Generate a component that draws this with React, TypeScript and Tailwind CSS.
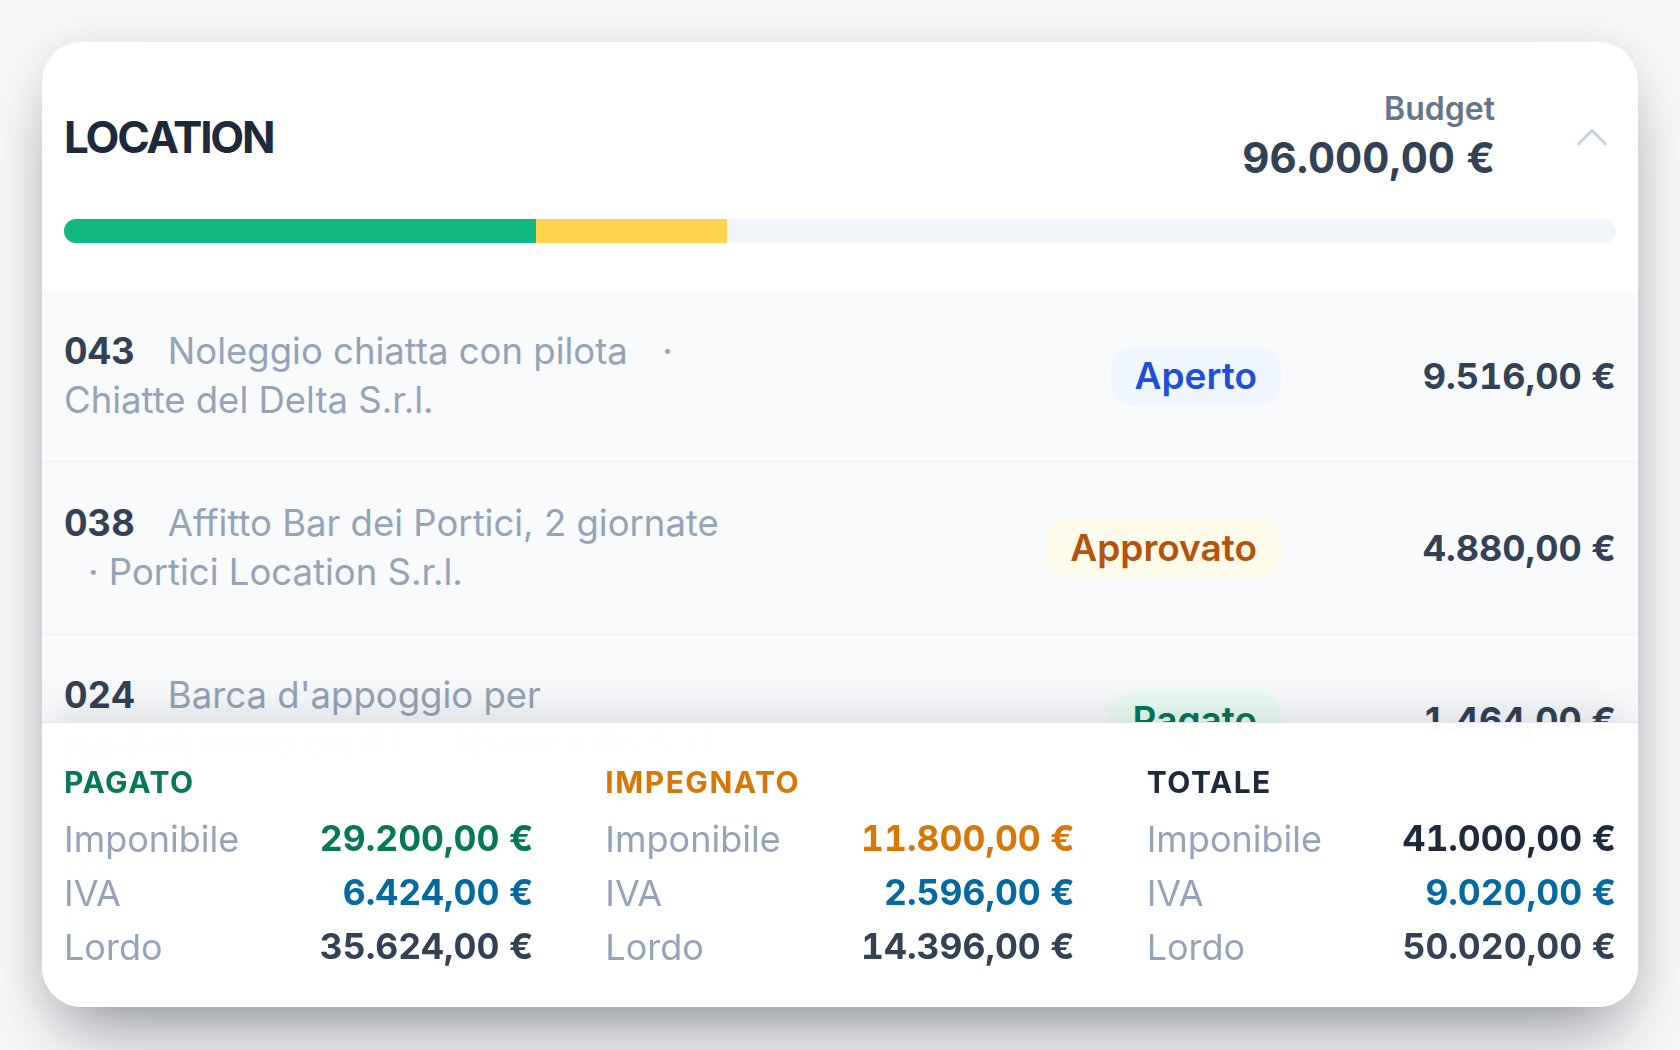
import { ChevronUp } from 'lucide-react';

type Row = {
  code: string;
  title: string;
  vendor: string;
  status: 'Aperto' | 'Approvato' | 'Pagato';
  amount: string;
};

const ROWS: Row[] = [
  { code: '043', title: 'Noleggio chiatta con pilota', vendor: 'Chiatte del Delta S.r.l.', status: 'Aperto', amount: '9.516,00 €' },
  { code: '038', title: 'Affitto Bar dei Portici, 2 giornate', vendor: 'Portici Location S.r.l.', status: 'Approvato', amount: '4.880,00 €' },
  { code: '024', title: "Barca d'appoggio per trasferimento ospiti", vendor: 'Nautica Po S.r.l.', status: 'Pagato', amount: '1.464,00 €' },
  { code: '017', title: 'Permessi portuali e ormeggio', vendor: 'Comune di Porto Tolle', status: 'Pagato', amount: '2.318,00 €' },
];

const BADGE: Record<Row['status'], string> = {
  Aperto: 'bg-[#eff6ff] text-[#1d4ed8]',
  Approvato: 'bg-[#fffbeb] text-[#b45309]',
  Pagato: 'bg-[#ecfdf5] text-[#047857]',
};

const TOTALS = [
  {
    label: 'PAGATO',
    labelClass: 'text-[#047857]',
    lines: [
      { k: 'Imponibile', v: '29.200,00 €', c: 'text-[#047857]' },
      { k: 'IVA', v: '6.424,00 €', c: 'text-[#0369a1]' },
      { k: 'Lordo', v: '35.624,00 €', c: 'text-[#334155]' },
    ],
  },
  {
    label: 'IMPEGNATO',
    labelClass: 'text-[#d97706]',
    lines: [
      { k: 'Imponibile', v: '11.800,00 €', c: 'text-[#d97706]' },
      { k: 'IVA', v: '2.596,00 €', c: 'text-[#0369a1]' },
      { k: 'Lordo', v: '14.396,00 €', c: 'text-[#334155]' },
    ],
  },
  {
    label: 'TOTALE',
    labelClass: 'text-[#1e293b]',
    lines: [
      { k: 'Imponibile', v: '41.000,00 €', c: 'text-[#1e293b]' },
      { k: 'IVA', v: '9.020,00 €', c: 'text-[#0369a1]' },
      { k: 'Lordo', v: '50.020,00 €', c: 'text-[#334155]' },
    ],
  },
];

export default function App() {
  const budget = 96000;
  const paid = 29200;
  const committed = 11800;

  return (
    <div className="min-h-screen bg-[#f7f7f8] p-[42px] font-['Inter',sans-serif]">
      <div className="flex h-[965px] flex-col overflow-hidden rounded-[40px] bg-white shadow-[0_40px_70px_-20px_rgba(15,23,42,0.42),0_0_44px_rgba(15,23,42,0.08)]">
        {/* header */}
        <div className="px-[22px] pt-[47px] pb-[48px]">
          <div className="flex items-center">
            <h2 className="flex-1 text-[44px] leading-[52px] font-bold tracking-tighter text-[#1e293b]">LOCATION</h2>
            <div className="text-right">
              <div className="text-[32px] leading-[40px] font-semibold text-[#64748b]">Budget</div>
              <div className="mt-[3px] text-[42px] leading-[52px] font-bold tabular-nums text-[#334155]">96.000,00 €</div>
            </div>
            <button className="ml-[73px] flex h-12 w-12 items-center justify-center text-[#cbd5e1]">
              <ChevronUp size={52} strokeWidth={1.5} className="shrink-0" />
            </button>
          </div>
          <div className="mt-[35px] flex h-6 overflow-hidden rounded-full bg-[#f1f5f9]">
            <div className="h-full bg-[#10b981]" style={{ width: `${(paid / budget) * 100}%` }} />
            <div className="h-full bg-[#fcd34d]" style={{ width: `${(committed / budget) * 100}%` }} />
          </div>
        </div>

        {/* list, totals stay pinned over it */}
        <div className="relative flex-1 overflow-hidden bg-[#f8fafc]">
          {ROWS.map((row) => (
            <div key={row.code} className="flex items-center border-b-2 border-[#f1f5f9] px-[22px] py-[36px]">
              <div className="min-w-0 flex-1">
                <p className="max-w-[680px] text-[36.5px] leading-[49px] text-[#94a3b8]">
                  <span className="mr-[33px] font-bold tabular-nums text-[#334155]">{row.code}</span>
                  {row.title} <span className="ml-[24px]">·</span> {row.vendor}
                </p>
              </div>
              <span className={`shrink-0 rounded-3xl px-[24px] py-[8px] text-[37px] leading-[44px] font-semibold ${BADGE[row.status]}`}>
                {row.status}
              </span>
              <div className="w-[335px] shrink-0 text-right text-[36px] leading-[49px] font-bold tabular-nums text-[#334155]">
                {row.amount}
              </div>
            </div>
          ))}

          <div className="absolute inset-x-0 bottom-0 grid h-[285px] grid-cols-3 gap-x-[72px] border-t border-[#e2e8f0] bg-white/[0.97] px-[22px] pt-[41px] shadow-[0_-20px_40px_-10px_rgba(15,23,42,0.13)] backdrop-blur-2xl">
            {TOTALS.map((col) => (
              <div key={col.label}>
                <div className={`text-[30px] leading-[36px] font-bold tracking-wider ${col.labelClass}`}>{col.label}</div>
                <div className="mt-[12px]">
                  {col.lines.map((line) => (
                    <div key={line.k} className="flex items-center justify-between leading-[54px]">
                      <span className="text-[36px] text-[#94a3b8]">{line.k}</span>
                      <span className={`text-[35.5px] font-bold tabular-nums ${line.c}`}>{line.v}</span>
                    </div>
                  ))}
                </div>
              </div>
            ))}
          </div>
        </div>
      </div>
    </div>
  );
}
